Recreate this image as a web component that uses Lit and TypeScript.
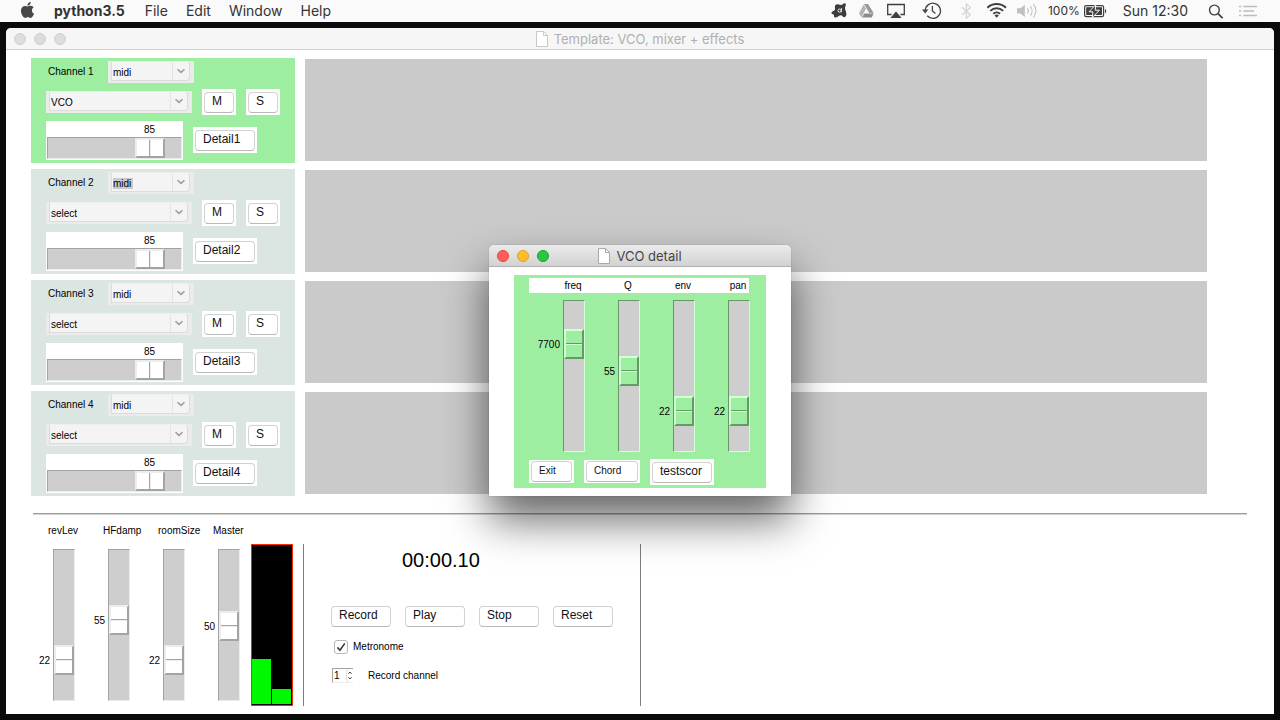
import { LitElement, html, svg, css } from "lit";
import { customElement, property } from "lit/decorators.js";
import { classMap } from "lit/directives/class-map.js";
import { styleMap } from "lit/directives/style-map.js";

const MIXER_FONT = css`"Liberation Sans", Helvetica, Arial, sans-serif`;
const SYSTEM_FONT = css`Inter, Roboto, sans-serif`;

interface Channel {
  id: number;
  source: string;
  instrument: string;
  level: number;
  active?: boolean;
  selected?: boolean;
}

const CHANNELS: Channel[] = [
  { id: 1, source: "midi", instrument: "VCO", level: 85, active: true },
  { id: 2, source: "midi", instrument: "select", level: 85, selected: true },
  { id: 3, source: "midi", instrument: "select", level: 85 },
  { id: 4, source: "midi", instrument: "select", level: 85 },
];

const EFFECTS = [
  { name: "revLev", value: 22 },
  { name: "HFdamp", value: 55 },
  { name: "roomSize", value: 22 },
  { name: "Master", value: 50 },
];

const DETAIL = [
  { name: "freq", value: 7700, min: 100, max: 10000 },
  { name: "Q", value: 55, min: 1, max: 100 },
  { name: "env", value: 22, min: 1, max: 100 },
  { name: "pan", value: 22, min: 1, max: 100 },
];

const METER = [45, 15];

const pushButton = css`
  button {
    box-sizing: border-box;
    height: 21px;
    margin: 0;
    padding: 0 7px 2px;
    border: 1px solid #d2d2d2;
    border-bottom-color: #b9b9b9;
    border-radius: 4px;
    background: #fff;
    color: #111;
    font: 12px/17px ${MIXER_FONT};
    text-align: left;
    white-space: nowrap;
  }
  .plate {
    display: flex;
    box-sizing: border-box;
    padding: 3px 2px 2px;
    background: #fff;
  }
  .plate button {
    flex: 1;
  }
`;

/* Vertical fader with its reading beside the thumb. */
@customElement("mix-fader")
export class MixFader extends LitElement {
  @property() name = "";
  @property({ type: Number }) value = 0;
  @property({ type: Number }) min = 1;
  @property({ type: Number }) max = 100;

  static styles = css`
    :host {
      --face: #fff;
      --light: #ececec;
      --dark: #a3a3a3;
      display: flex;
      width: 55px;
      height: 152px;
      font: 10px/12px ${MIXER_FONT};
    }
    .reading {
      display: flex;
      flex-direction: column;
      justify-content: flex-end;
      align-items: flex-end;
      box-sizing: border-box;
      width: 33px;
      padding-right: 3px;
    }
    input {
      writing-mode: vertical-lr;
      direction: rtl;
      appearance: none;
      -webkit-appearance: none;
      box-sizing: border-box;
      width: 22px;
      height: 152px;
      margin: 0;
      border: 1px solid var(--dark);
      border-right-color: var(--light);
      border-bottom-color: var(--light);
      background: #cecece;
    }
    input::-webkit-slider-thumb {
      appearance: none;
      -webkit-appearance: none;
      box-sizing: border-box;
      width: 20px;
      height: 30px;
      border: 2px solid;
      border-color: var(--light) var(--dark) var(--dark) var(--light);
      border-radius: 0;
      background: linear-gradient(
        var(--face) 12px,
        var(--dark) 12px,
        var(--dark) 13px,
        var(--light) 13px,
        var(--light) 14px,
        var(--face) 14px
      );
    }
  `;

  render() {
    const travel = ((this.value - this.min) / (this.max - this.min)) * 120;
    return html`
      <div class="reading" style=${styleMap({ paddingBottom: `${Math.round(travel) + 9}px` })}>
        <output>${this.value}</output>
      </div>
      <input
        type="range"
        aria-label=${this.name}
        min=${this.min}
        max=${this.max}
        .value=${String(this.value)}
      />
    `;
  }
}

@customElement("mix-combo")
export class MixCombo extends LitElement {
  @property() value = "";
  @property() label = "";
  @property({ type: Boolean }) selected = false;

  static styles = css`
    :host {
      display: grid;
      box-sizing: border-box;
      height: 22px;
      padding: 0 4px 2px 3px;
      background: #ebebeb;
    }
    select,
    svg {
      grid-area: 1 / 1;
    }
    select {
      appearance: none;
      -webkit-appearance: none;
      box-sizing: border-box;
      width: 100%;
      height: 20px;
      margin: 0;
      padding: 4px 18px 0 1px;
      border: 1px solid #dcdcdc;
      border-top-color: #efefef;
      border-radius: 0 4px 4px 0;
      background: #f4f4f4;
      color: #000;
      font: 10px/12px ${MIXER_FONT};
    }
    .picked {
      background: linear-gradient(#c9c9c9, #c9c9c9) 1px 5px / 20px 11px no-repeat #f4f4f4;
    }
    svg {
      justify-self: end;
      width: 18px;
      height: 20px;
      pointer-events: none;
    }
  `;

  render() {
    return html`
      <select aria-label=${this.label} class=${classMap({ picked: this.selected })}>
        <option selected>${this.value}</option>
      </select>
      <svg viewBox="0 0 18 20" fill="none">
        <path d="M0.5 1V19" stroke="#e4e4e4" />
        <path d="M5.5 8.2L9 11.4L12.5 8.2" stroke="#9c9c9c" stroke-width="1.5" />
      </svg>
    `;
  }
}

@customElement("mix-channel")
export class MixChannel extends LitElement {
  @property({ attribute: false }) channel!: Channel;

  static styles = [
    pushButton,
    css`
      :host {
        display: block;
        font: 10px/12px ${MIXER_FONT};
      }
      .card {
        display: flex;
        flex-direction: column;
        gap: 6px;
        padding: 3px 15px;
        background: #dbe6e2;
      }
      .active {
        background: #9eeea1;
      }
      .row {
        display: flex;
        align-items: center;
        gap: 10px;
      }
      .head {
        gap: 0;
      }
      .title {
        width: 60px;
        padding-left: 2px;
      }
      .source {
        width: 86px;
      }
      .instrument {
        width: 146px;
      }
      .small {
        width: 34px;
      }
      .wide {
        width: 64px;
        margin-bottom: 1px;
      }
      .level {
        box-sizing: border-box;
        width: 137px;
        height: 39px;
        padding: 3px 1px 1px;
        background: #fff;
      }
      .level output {
        display: block;
        height: 13px;
        padding-right: 27px;
        text-align: right;
      }
      .level input {
        appearance: none;
        -webkit-appearance: none;
        display: block;
        box-sizing: border-box;
        width: 100%;
        height: 22px;
        margin: 0;
        border: 1px solid #a3a3a3;
        border-right-color: #ececec;
        border-bottom-color: #ececec;
        background: #cecece;
      }
      .level input::-webkit-slider-thumb {
        appearance: none;
        -webkit-appearance: none;
        box-sizing: border-box;
        width: 30px;
        height: 20px;
        border: 2px solid;
        border-color: #ececec #a3a3a3 #a3a3a3 #ececec;
        border-radius: 0;
        background: linear-gradient(
          90deg,
          #fff 12px,
          #a3a3a3 12px,
          #a3a3a3 13px,
          #ececec 13px,
          #ececec 14px,
          #fff 14px
        );
      }
    `,
  ];

  render() {
    const c = this.channel;
    return html`
      <section class=${classMap({ card: true, active: !!c.active })}>
        <div class="row head">
          <div class="title">Channel ${c.id}</div>
          <mix-combo
            class="source"
            label="Source"
            .value=${c.source}
            ?selected=${c.selected}
          ></mix-combo>
        </div>
        <div class="row">
          <mix-combo class="instrument" label="Instrument" .value=${c.instrument}></mix-combo>
          <div class="plate small"><button>M</button></div>
          <div class="plate small"><button>S</button></div>
        </div>
        <div class="row">
          <div class="level">
            <output>${c.level}</output>
            <input
              type="range"
              aria-label="Level"
              min="1"
              max="100"
              .value=${String(c.level)}
            />
          </div>
          <div class="plate wide"><button>Detail${c.id}</button></div>
        </div>
      </section>
    `;
  }
}

@customElement("menu-bar")
export class MenuBar extends LitElement {
  static styles = css`
    :host {
      display: flex;
      justify-content: space-between;
      align-items: center;
      height: 22px;
      padding: 0 23px 0 19px;
      background: #fafafa;
      color: #333;
      font: 14px/22px ${SYSTEM_FONT};
      white-space: nowrap;
    }
    nav,
    .tray {
      display: flex;
      align-items: center;
    }
    nav {
      gap: 18px;
    }
    .tray {
      gap: 10px;
      font-size: 13px;
    }
    .app {
      padding-right: 2px;
      font-weight: 700;
    }
    .battery {
      display: flex;
      align-items: center;
      gap: 4px;
      font-size: 12px;
    }
    .clock {
      padding: 0 6px;
      font-size: 14px;
    }
    svg {
      display: block;
      height: 22px;
      fill: none;
    }
  `;

  render() {
    return html`
      <nav>
        <svg width="17" viewBox="0 -3 24 33">
          <path
            fill="#484848"
            d="M12.152 6.896c-.948 0-2.415-1.078-3.96-1.04-2.04.027-3.91 1.183-4.961 3.014-2.117 3.675-.546 9.103 1.519 12.09 1.013 1.454 2.208 3.09 3.792 3.039 1.52-.065 2.09-.987 3.935-.987 1.831 0 2.35.987 3.96.948 1.637-.026 2.676-1.48 3.676-2.948 1.156-1.688 1.636-3.325 1.662-3.415-.039-.013-3.182-1.221-3.22-4.857-.026-3.04 2.48-4.494 2.597-4.559-1.429-2.09-3.623-2.324-4.39-2.376-2-.156-3.675 1.09-4.61 1.09zM15.53 3.83c.843-1.012 1.4-2.427 1.245-3.83-1.207.052-2.662.805-3.532 1.818-.78.896-1.454 2.338-1.273 3.714 1.338.104 2.715-.688 3.559-1.701"
          />
        </svg>
        <span class="app">python3.5</span>
        <span>File</span>
        <span>Edit</span>
        <span>Window</span>
        <span>Help</span>
      </nav>
      <div class="tray">
        <svg width="16" viewBox="0 0 16 22">
          <path
            fill="#3c3c3c"
            d="M4.5 5C6 3.4 8 4.6 9.6 5C11.4 5.2 12.4 2.8 14 3.2C15.6 3.8 14.6 6 14 7.4C13.6 9 15.4 11.6 15.4 14C15.4 16 14 17.6 12.8 17.2C11.4 16.6 11.4 15 9.6 15.2C7.6 15.4 6.4 17.6 4 17.4C2.4 17.2 3.4 15.4 2.6 14.6C1.8 14 0.4 14.2 0.4 12.8C0.6 11.4 3.4 11.4 4 9.6C4.4 8 3.2 6.4 4.5 5Z"
          />
          <circle cx="8.6" cy="10.6" r="1.6" stroke="#fafafa" stroke-width="0.9" />
          <path d="M10.6 8.2L10.2 12.4" stroke="#fafafa" stroke-width="0.9" />
        </svg>
        <svg width="20" viewBox="0 0 20 22">
          <path fill="#9a9a9a" d="M7 4H11L16.6 13H12.2Z" />
          <path fill="#b4b4b4" d="M6.6 4.6L9 8.8L4.4 17.4L2 13.2Z" />
          <path fill="#8c8c8c" d="M7.4 13.6H16.8L14.6 17.6H5Z" />
        </svg>
        <svg width="20" viewBox="0 0 20 22">
          <path d="M4.5 14.5H0.7V4.5H17.3V14.5H13.5" stroke="#3f3f3f" stroke-width="1.3" />
          <path fill="#3f3f3f" d="M9 11.6L14.6 18H3.4Z" />
        </svg>
        <svg width="28" viewBox="0 0 28 22">
          <path d="M8.3 10.6A7.6 7.6 0 1 1 10.2 15.8" stroke="#444" stroke-width="1.3" />
          <path fill="#444" d="M5 9.6H11.4L8.2 13.4Z" />
          <path d="M15.4 6V11L18.4 13.6" stroke="#444" stroke-width="1.3" />
        </svg>
        <svg width="22" viewBox="0 0 22 22">
          <path d="M7 7.2L15.4 14.8L11.4 18.2V4L15.4 7.4L7 15" stroke="#d3d3d3" stroke-width="1.2" />
        </svg>
        <svg width="20" viewBox="0 0 20 22" stroke="#404040" stroke-width="1.9">
          <path d="M0.4 7.8A13.4 13.4 0 0 1 19 7.8" />
          <path d="M3.3 10.9A9.2 9.2 0 0 1 16.1 10.9" />
          <path d="M6.3 13.8A5 5 0 0 1 13.1 13.8" />
          <path fill="#404040" stroke="none" d="M7.6 15.4A3.4 3.4 0 0 1 11.8 15.4L9.7 17.8Z" />
        </svg>
        <svg width="21" viewBox="0 0 21 22" stroke="#c4c4c4" stroke-width="1.2">
          <path fill="#c0c0c0" stroke="none" d="M0 8.2H3.4L7.8 4.8V17L3.4 13.6H0Z" />
          <path d="M10.4 8.4A4 4 0 0 1 10.4 13.4" />
          <path d="M13.4 6.4A7 7 0 0 1 13.4 15.4" />
          <path d="M16.4 4.2A10 10 0 0 1 16.4 17.4" />
        </svg>
        <div class="battery">
          <span>100%</span>
          <svg width="23" viewBox="0 0 23 22">
            <rect x="0.6" y="5.6" width="19" height="11" rx="1.6" stroke="#3f3f3f" stroke-width="1.2" />
            <rect x="2.2" y="7.2" width="15.8" height="7.8" fill="#3f3f3f" />
            <path d="M21 9C22.6 9.4 22.6 12.8 21 13.2Z" fill="#3f3f3f" />
            <path
              fill="#3f3f3f"
              stroke="#fafafa"
              stroke-width="1"
              d="M11.8 4.6L5 11.8H9L8.2 17.6L15.4 10.2H11.2Z"
            />
          </svg>
        </div>
        <span class="clock">Sun 12:30</span>
        <svg width="25" viewBox="0 0 25 22">
          <circle cx="10.4" cy="10" r="4.9" stroke="#444" stroke-width="1.4" />
          <path d="M14 13.6L18.6 18.2" stroke="#444" stroke-width="1.8" />
        </svg>
        <svg width="18" viewBox="0 0 18 22" stroke="#bcbcbc" stroke-width="1.5">
          <path d="M0 6.5H2.2M4.4 6.5H18M0 11H2.2M4.4 11H15M0 15.5H2.2M4.4 15.5H18" />
        </svg>
      </div>
    `;
  }
}

const docIcon = (stroke: string) => svg`
  <svg class="doc" viewBox="0 0 12 16">
    <path d="M0.5 0.5H7.5L11.5 4.5V15.5H0.5Z" fill="#fff" stroke=${stroke} />
    <path d="M7.5 0.5V4.5H11.5" fill="none" stroke=${stroke} />
  </svg>
`;

@customElement("app-root")
export class AppRoot extends LitElement {
  static styles = [
    pushButton,
    css`
      :host {
        display: flex;
        flex-direction: column;
        box-sizing: border-box;
        position: relative;
        min-height: 100vh;
        background: #0a0a0a;
        color: #000;
        font: 10px/12px ${MIXER_FONT};
      }
      .window {
        display: flex;
        flex: 1;
        flex-direction: column;
        margin: 6px;
        border-radius: 5px 5px 0 0;
        background: #fff;
        overflow: hidden;
      }
      .titlebar {
        display: grid;
        grid-template-columns: 1fr auto 1fr;
        align-items: center;
        box-sizing: border-box;
        height: 22px;
        padding: 0 8px;
        border-bottom: 1px solid #d0d0d0;
        background: #f6f6f6;
        color: #b0b0b0;
        font: 13px/20px ${SYSTEM_FONT};
        white-space: nowrap;
      }
      .lights {
        display: flex;
        gap: 8px;
      }
      .light {
        box-sizing: border-box;
        width: 12px;
        height: 12px;
        border: 1px solid #cfcfcf;
        border-radius: 50%;
        background: #dcdcdc;
      }
      .caption {
        display: flex;
        align-items: center;
        gap: 6px;
      }
      .doc {
        width: 12px;
        height: 16px;
      }
      .rack {
        display: grid;
        grid-template-columns: 264px 1fr;
        gap: 6px 10px;
        padding: 8px 67px 0 25px;
      }
      .lane {
        margin: 1px 0 2px;
        background: #cacaca;
      }
      .rule {
        height: 1px;
        margin: 17px 27px 0;
        border: 0;
        border-bottom: 1px solid #d4d4d4;
        background: #9c9c9c;
      }
      .deck {
        display: flex;
        flex: 1;
        padding: 9px 14px 8px;
      }
      .names,
      .faders {
        display: flex;
      }
      .names {
        height: 25px;
        line-height: 13px;
      }
      .name {
        box-sizing: border-box;
        width: 55px;
        padding-left: 28px;
        white-space: nowrap;
      }
      .meter {
        display: flex;
        align-items: flex-end;
        gap: 1px;
        box-sizing: border-box;
        width: 42px;
        margin: 20px 10px 0 11px;
        padding: 0 1px 1px 0;
        border: 1px solid #ff2a00;
        background: #000;
      }
      .bar {
        flex: 1;
        background: #00f900;
      }
      .transport {
        box-sizing: border-box;
        width: 338px;
        margin-top: 20px;
        padding: 4px 27px 0;
        border: solid #7d7d7d;
        border-width: 0 1px;
      }
      .time {
        padding-left: 71px;
        font-size: 20px;
        line-height: 24px;
      }
      .keys {
        display: flex;
        gap: 14px;
        margin-top: 34px;
      }
      .keys button {
        width: 60px;
      }
      .option {
        display: flex;
        align-items: center;
        gap: 5px;
        margin-top: 13px;
        padding-left: 3px;
      }
      .check {
        display: grid;
      }
      .check input,
      .check svg {
        grid-area: 1 / 1;
        width: 14px;
        height: 14px;
        margin: 0;
      }
      .check input {
        appearance: none;
        -webkit-appearance: none;
        box-sizing: border-box;
        border: 1px solid #b8b8b8;
        border-radius: 3px;
        background: #fff;
      }
      .check svg {
        pointer-events: none;
      }
      .record {
        display: flex;
        align-items: center;
        gap: 15px;
        margin-top: 14px;
        padding-left: 1px;
      }
      .spin {
        display: flex;
        box-sizing: border-box;
        width: 21px;
        height: 15px;
        border: 1px solid #a3a3a3;
        border-right: 0;
        border-bottom-color: #ececec;
      }
      .spin input {
        appearance: textfield;
        -moz-appearance: textfield;
        width: 12px;
        min-width: 0;
        margin: 0;
        padding: 0 0 0 1px;
        border: 0;
        background: #fff;
        font: 10px/12px ${MIXER_FONT};
      }
      .spin input::-webkit-inner-spin-button {
        display: none;
      }
      .spin svg {
        width: 7px;
        height: 13px;
      }
      .dialog {
        position: absolute;
        top: 245px;
        right: 0;
        left: 0;
        width: 302px;
        margin: 0 auto;
        padding-bottom: 8px;
        border-radius: 5px 5px 0 0;
        background: #fff;
        box-shadow:
          0 0 1px rgba(0, 0, 0, 0.45),
          0 24px 44px rgba(0, 0, 0, 0.6);
      }
      .dialog .titlebar {
        border-bottom-color: #b1b1b1;
        border-radius: 5px 5px 0 0;
        background: linear-gradient(#ebebeb, #d2d2d2);
        color: #454545;
      }
      .close {
        border-color: #e2463f;
        background: #ff5f57;
      }
      .minimise {
        border-color: #dfa023;
        background: #ffbd2e;
      }
      .zoom {
        border-color: #14a62a;
        background: #28c840;
      }
      .panel {
        margin: 8px 25px 0;
        padding: 3px 15px;
        background: #9eeea1;
      }
      .panel .names {
        width: 220px;
        height: 15px;
        margin-bottom: 7px;
        background: #fff;
        line-height: 15px;
      }
      .panel .name {
        padding-left: 33px;
        text-align: center;
      }
      .panel .faders {
        padding-left: 1px;
      }
      .panel mix-fader {
        --face: #9eeea1;
        --light: #d2ffd4;
        --dark: #659a67;
      }
      .actions {
        display: flex;
        align-items: center;
        gap: 10px;
        margin-top: 7px;
      }
      .exit,
      .chord {
        margin-bottom: 1px;
        padding: 1px 2px;
      }
      .exit button,
      .chord button {
        font-size: 10px;
      }
      .exit {
        width: 45px;
      }
      .chord {
        width: 56px;
      }
      .test {
        width: 64px;
      }
    `,
  ];

  private faders(list: { name: string; value: number; min?: number; max?: number }[]) {
    return html`
      <div class="names">${list.map((f) => html`<div class="name">${f.name}</div>`)}</div>
      <div class="faders">
        ${list.map(
          (f) => html`<mix-fader
            name=${f.name}
            .value=${f.value}
            .min=${f.min ?? 1}
            .max=${f.max ?? 100}
          ></mix-fader>`
        )}
      </div>
    `;
  }

  render() {
    return html`
      <menu-bar></menu-bar>
      <main class="window">
        <header class="titlebar">
          <div class="lights">
            <span class="light"></span><span class="light"></span><span class="light"></span>
          </div>
          <div class="caption">${docIcon("#c9c9c9")}<span>Template: VCO, mixer + effects</span></div>
        </header>
        <div class="rack">
          ${CHANNELS.map(
            (c) => html`<mix-channel .channel=${c}></mix-channel>
              <div class="lane"></div>`
          )}
        </div>
        <hr class="rule" />
        <div class="deck">
          <div>${this.faders(EFFECTS)}</div>
          <div class="meter">
            ${METER.map(
              (h) => html`<div class="bar" style=${styleMap({ height: `${(h / 159) * 100}%` })}></div>`
            )}
          </div>
          <div class="transport">
            <div class="time">00:00.10</div>
            <div class="keys">
              <button>Record</button>
              <button>Play</button>
              <button>Stop</button>
              <button>Reset</button>
            </div>
            <label class="option">
              <span class="check">
                <input type="checkbox" checked />
                <svg viewBox="0 0 14 14" fill="none">
                  <path d="M3.4 7.4L6 10.2L10.8 3.4" stroke="#3a3a3a" stroke-width="1.6" />
                </svg>
              </span>
              Metronome
            </label>
            <div class="record">
              <div class="spin">
                <input id="record-channel" type="number" value="1" min="1" max="4" />
                <svg viewBox="0 0 7 13" fill="none">
                  <path d="M2.5 0.5Q0.5 0.5 0.5 3V10Q0.5 12.5 2.5 12.5" stroke="#dcdcdc" />
                  <path d="M2.4 4.8L4 3L5.6 4.8M2.4 8.2L4 10L5.6 8.2" stroke="#444" />
                </svg>
              </div>
              <label for="record-channel">Record channel</label>
            </div>
          </div>
        </div>
      </main>
      <section class="dialog" role="dialog" aria-label="VCO detail">
        <header class="titlebar">
          <div class="lights">
            <span class="light close"></span><span class="light minimise"></span
            ><span class="light zoom"></span>
          </div>
          <div class="caption">${docIcon("#a8a8a8")}<span>VCO detail</span></div>
        </header>
        <div class="panel">
          ${this.faders(DETAIL)}
          <div class="actions">
            <div class="plate exit"><button>Exit</button></div>
            <div class="plate chord"><button>Chord</button></div>
            <div class="plate test"><button>testscor</button></div>
          </div>
        </div>
      </section>
    `;
  }
}
